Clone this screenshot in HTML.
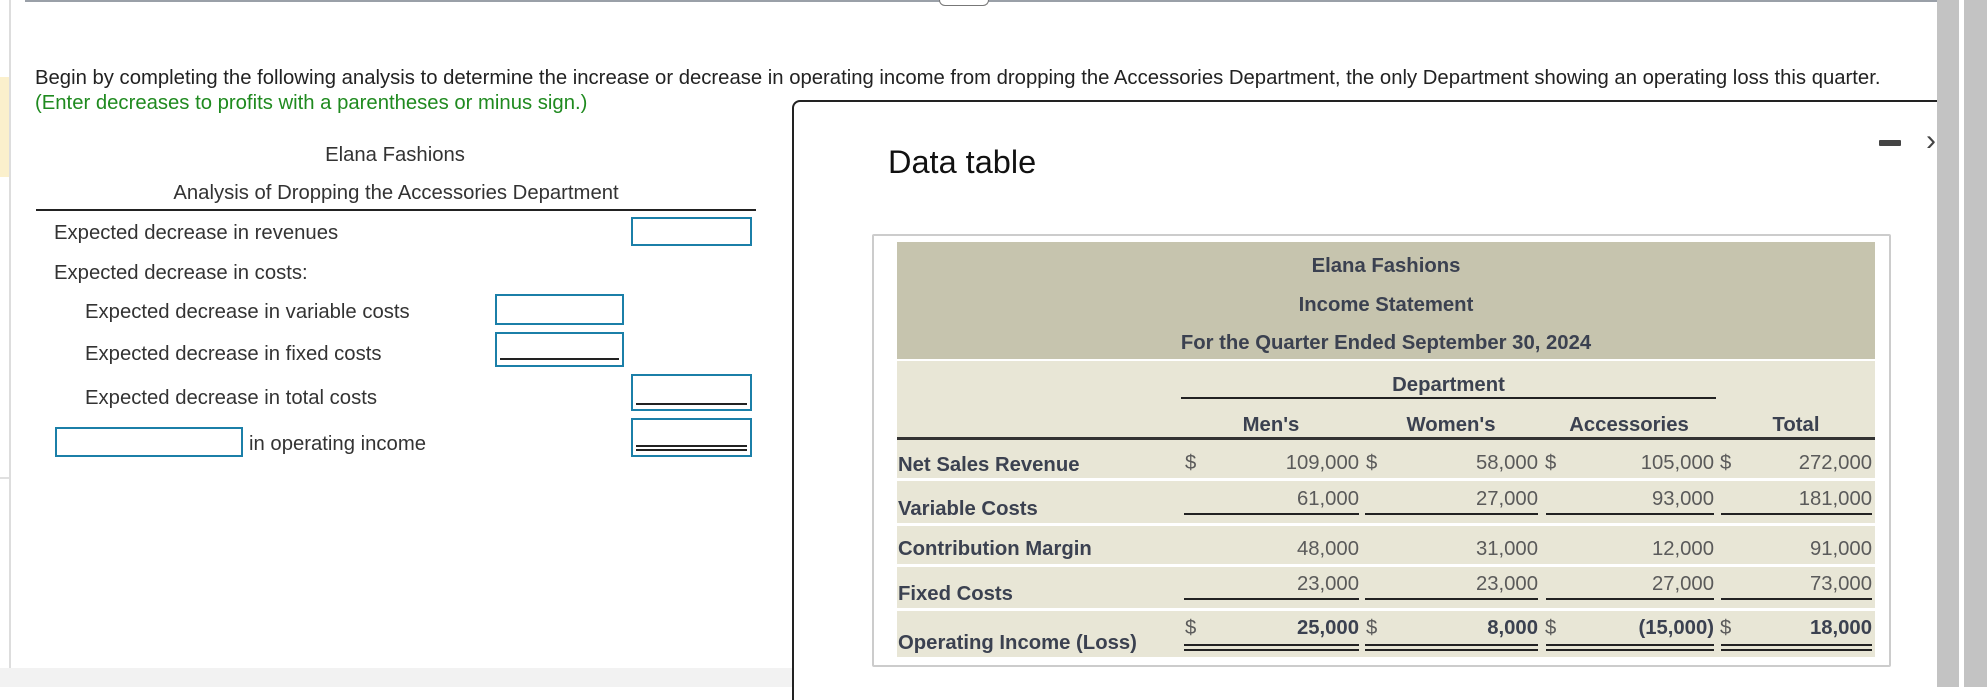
<!DOCTYPE html>
<html><head><meta charset="utf-8"><style>
*{margin:0;padding:0;box-sizing:border-box}
body{width:1987px;height:687px;position:relative;overflow:hidden;background:#fff;font-family:"Liberation Sans",Arial,sans-serif}
.a{position:absolute;white-space:nowrap}
.l{font-size:20.3px;color:#333;line-height:22px}
.box{position:absolute;border:2px solid #1b7fa8;background:#fff}
.t{font-size:20.3px;line-height:22px;color:#3b4150}
.b{font-weight:bold}
.v{color:#5a5a5a;text-align:right}
.ln{position:absolute;height:2px;background:#222}
.row{position:absolute;left:897px;width:978px;background:#e8e6d6}
</style></head><body>
<div class="a" style="left:25px;top:0;width:1912px;height:2px;background:#9aa0a8"></div>
<div class="a" style="left:939px;top:0;width:50px;height:6px;border:1.5px solid #777;border-top:none;border-radius:0 0 8px 8px;background:#fff"></div>
<div class="a" style="left:9px;top:0;width:1.5px;height:668px;background:#ddd"></div>
<div class="a" style="left:0;top:77px;width:9px;height:100px;background:#fbf0cc"></div>
<div class="a" style="left:0;top:477px;width:9px;height:2px;background:#e0e0e0"></div>
<div class="a" style="left:0;top:668px;width:793px;height:19px;background:#f2f2f2"></div>
<div class="a" style="left:1937px;top:0;width:22px;height:687px;background:#c3c3c3"></div>
<div class="a" style="left:1964px;top:0;width:23px;height:687px;background:#c3c3c3"></div>

<div class="a l" style="left:35px;top:67px;color:#222">Begin by completing the following analysis to determine the increase or decrease in operating income from dropping the Accessories Department, the only Department showing an operating loss this quarter.</div>
<div class="a l" style="left:35px;top:92px;color:#1f8a1f">(Enter decreases to profits with a parentheses or minus sign.)</div>

<div class="a l" style="left:0;width:790px;text-align:center;top:144px">Elana Fashions</div>
<div class="a l" style="left:36px;width:720px;text-align:center;top:182px">Analysis of Dropping the Accessories Department</div>
<div class="a" style="left:36px;top:209px;width:720px;height:2px;background:#222"></div>
<div class="a l" style="left:54px;top:222px">Expected decrease in revenues</div>
<div class="box" style="left:631px;top:217px;width:121px;height:29px"></div>
<div class="a l" style="left:54px;top:262px">Expected decrease in costs:</div>
<div class="a l" style="left:85px;top:301px">Expected decrease in variable costs</div>
<div class="box" style="left:495px;top:294px;width:129px;height:31px"></div>
<div class="a l" style="left:85px;top:343px">Expected decrease in fixed costs</div>
<div class="box" style="left:495px;top:332px;width:129px;height:35px"><div class="ln" style="left:3px;right:3px;top:24px"></div></div>
<div class="a l" style="left:85px;top:387px">Expected decrease in total costs</div>
<div class="box" style="left:631px;top:374px;width:121px;height:37px"><div class="ln" style="left:3px;right:3px;top:27px"></div></div>
<div class="box" style="left:55px;top:427px;width:188px;height:30px"></div>
<div class="a l" style="left:249px;top:433px">in operating income</div>
<div class="box" style="left:631px;top:418px;width:121px;height:39px"><div class="ln" style="left:3px;right:3px;top:25px"></div><div class="ln" style="left:3px;right:3px;top:29px"></div></div>

<!-- modal -->
<div class="a" style="left:792px;top:100px;width:1145px;height:600px;border-left:2px solid #222;border-top:2px solid #222;border-radius:8px 0 0 0;background:#fff"></div>
<div class="a" style="left:888px;top:144px;font-size:32.5px;color:#111;line-height:36px">Data table</div>
<div class="a" style="left:1879px;top:140px;width:22px;height:6px;background:#444;border-radius:1px"></div>
<div class="a" style="left:1926px;top:124px;font-size:30px;color:#444;line-height:34px">›</div>

<div class="a" style="left:872px;top:234px;width:1019px;height:433px;border:2px solid #ccc;border-radius:2px"></div>
<div class="a" style="left:897px;top:242px;width:978px;height:117px;background:#c6c4ae"></div>
<div class="row" style="top:361px;height:77px"></div>
<div class="a" style="left:897px;top:437px;width:978px;height:3px;background:#333"></div>
<div class="row" style="top:440px;height:38px"></div>
<div class="row" style="top:481px;height:42px"></div>
<div class="row" style="top:526px;height:38px"></div>
<div class="row" style="top:567px;height:41px"></div>
<div class="row" style="top:611px;height:46px"></div>

<div class="a t b" style="left:897px;width:978px;text-align:center;top:255px">Elana Fashions</div>
<div class="a t b" style="left:897px;width:978px;text-align:center;top:294px">Income Statement</div>
<div class="a t b" style="left:897px;width:978px;text-align:center;top:332px">For the Quarter Ended September 30, 2024</div>
<div class="a t b" style="left:1181px;width:535px;text-align:center;top:374px">Department</div>
<div class="ln" style="left:1181px;width:535px;top:397px"></div>
<div class="a t b" style="left:1221px;width:100px;text-align:center;top:414px">Men's</div>
<div class="a t b" style="left:1391px;width:120px;text-align:center;top:414px">Women's</div>
<div class="a t b" style="left:1559px;width:140px;text-align:center;top:414px">Accessories</div>
<div class="a t b" style="left:1746px;width:100px;text-align:center;top:414px">Total</div>

<div class="a t b" style="left:898px;top:454px">Net Sales Revenue</div>
<div class="a t b" style="left:898px;top:498px">Variable Costs</div>
<div class="a t b" style="left:898px;top:538px">Contribution Margin</div>
<div class="a t b" style="left:898px;top:583px">Fixed Costs</div>
<div class="a t b" style="left:898px;top:632px">Operating Income (Loss)</div>

<div class="a t v" style="left:1185px;top:452px">$</div>
<div class="a t v" style="left:1230px;width:129px;top:452px">109,000</div>
<div class="a t v" style="left:1366px;top:452px">$</div>
<div class="a t v" style="left:1420px;width:118px;top:452px">58,000</div>
<div class="a t v" style="left:1545px;top:452px">$</div>
<div class="a t v" style="left:1590px;width:124px;top:452px">105,000</div>
<div class="a t v" style="left:1720px;top:452px">$</div>
<div class="a t v" style="left:1760px;width:112px;top:452px">272,000</div>

<div class="a t v" style="left:1240px;width:119px;top:488px">61,000</div>
<div class="a t v" style="left:1420px;width:118px;top:488px">27,000</div>
<div class="a t v" style="left:1590px;width:124px;top:488px">93,000</div>
<div class="a t v" style="left:1760px;width:112px;top:488px">181,000</div>
<div class="ln" style="left:1184px;width:175px;top:513px"></div>
<div class="ln" style="left:1365px;width:173px;top:513px"></div>
<div class="ln" style="left:1546px;width:168px;top:513px"></div>
<div class="ln" style="left:1721px;width:151px;top:513px"></div>

<div class="a t v" style="left:1240px;width:119px;top:538px">48,000</div>
<div class="a t v" style="left:1420px;width:118px;top:538px">31,000</div>
<div class="a t v" style="left:1590px;width:124px;top:538px">12,000</div>
<div class="a t v" style="left:1760px;width:112px;top:538px">91,000</div>

<div class="a t v" style="left:1240px;width:119px;top:573px">23,000</div>
<div class="a t v" style="left:1420px;width:118px;top:573px">23,000</div>
<div class="a t v" style="left:1590px;width:124px;top:573px">27,000</div>
<div class="a t v" style="left:1760px;width:112px;top:573px">73,000</div>
<div class="ln" style="left:1184px;width:175px;top:598px"></div>
<div class="ln" style="left:1365px;width:173px;top:598px"></div>
<div class="ln" style="left:1546px;width:168px;top:598px"></div>
<div class="ln" style="left:1721px;width:151px;top:598px"></div>

<div class="a t v" style="left:1185px;top:617px">$</div>
<div class="a t b" style="left:1240px;width:119px;top:617px;text-align:right">25,000</div>
<div class="a t v" style="left:1366px;top:617px">$</div>
<div class="a t b" style="left:1420px;width:118px;top:617px;text-align:right">8,000</div>
<div class="a t v" style="left:1545px;top:617px">$</div>
<div class="a t b" style="left:1590px;width:124px;top:617px;text-align:right">(15,000)</div>
<div class="a t v" style="left:1720px;top:617px">$</div>
<div class="a t b" style="left:1760px;width:112px;top:617px;text-align:right">18,000</div>
<div class="ln" style="left:1184px;width:175px;top:644px"></div><div class="ln" style="left:1184px;width:175px;top:649px"></div>
<div class="ln" style="left:1365px;width:173px;top:644px"></div><div class="ln" style="left:1365px;width:173px;top:649px"></div>
<div class="ln" style="left:1546px;width:168px;top:644px"></div><div class="ln" style="left:1546px;width:168px;top:649px"></div>
<div class="ln" style="left:1721px;width:151px;top:644px"></div><div class="ln" style="left:1721px;width:151px;top:649px"></div>
</body></html>
